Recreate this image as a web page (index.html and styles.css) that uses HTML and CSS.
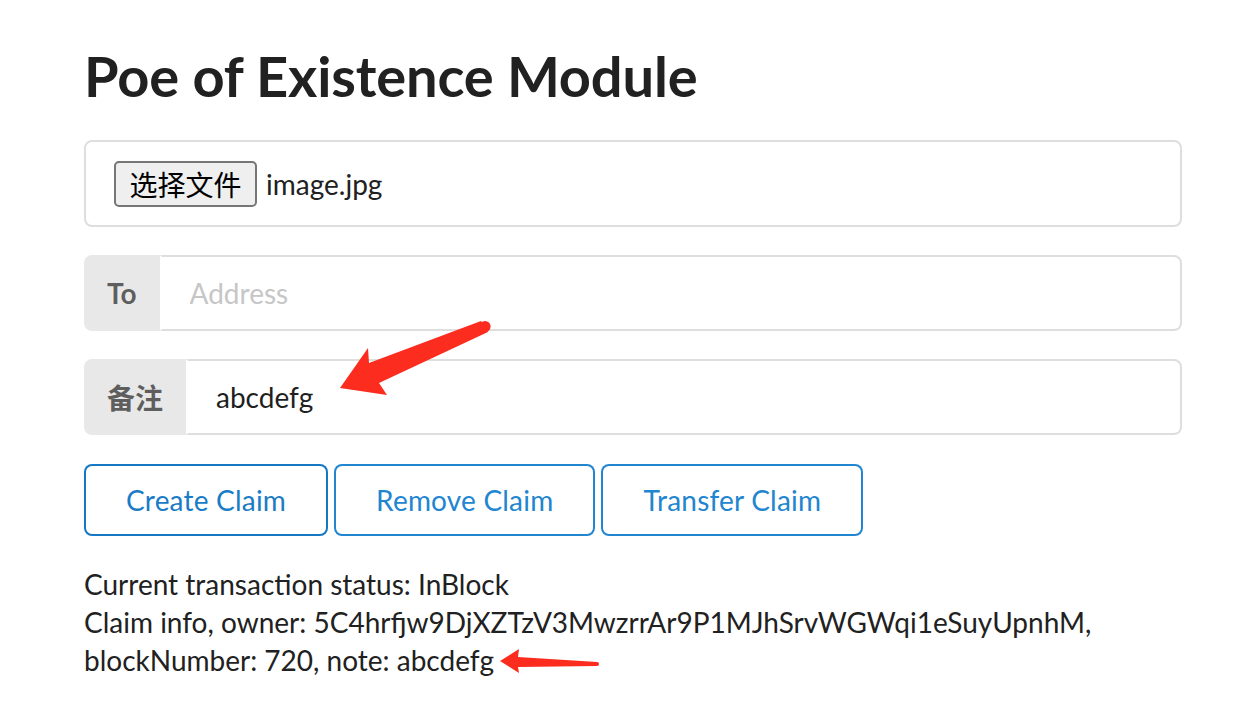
FILE: index.html
```html
<!DOCTYPE html>
<html lang="zh">
<head>
<meta charset="utf-8">
<title>Poe of Existence Module</title>
<link rel="stylesheet" href="styles.css">
</head>
<body>
<div class="page">
  <h1 class="title">Poe of Existence Module</h1>
  <form class="form">
    <div class="field">
      <div class="file-input">
        <span class="file-btn">选择文件</span>
        <span class="file-name">image.jpg</span>
      </div>
    </div>
    <div class="field">
      <div class="labeled">
        <div class="label">To</div>
        <input class="text" type="text" placeholder="Address">
      </div>
    </div>
    <div class="field">
      <div class="labeled">
        <div class="label cjk">备注</div>
        <input class="text" type="text" value="abcdefg">
      </div>
    </div>
    <div class="buttons">
      <button type="button" class="btn btn-active">Create Claim</button>
      <button type="button" class="btn">Remove Claim</button>
      <button type="button" class="btn">Transfer Claim</button>
    </div>
  </form>
  <div class="status">
    <div>Current transaction status: InBlock</div>
    <div>Claim info, owner: 5C4hrfjw9DjXZTzV3MwzrrAr9P1MJhSrvWGWqi1eSuyUpnhM, blockNumber: 720, note: abcdefg</div>
  </div>
</div>
<svg class="annotations" width="1254" height="704" viewBox="0 0 1254 704">
  <g class="arrow">
    <polygon points="481,321 369,363 368,348 340,388 387,395 379,383 488,332"/>
    <circle cx="485" cy="326.5" r="5.6"/>
    <polygon points="500,661 519,649 518,657 597,662 597,666 518,667 519,673"/>
    <circle cx="597" cy="664" r="2"/>
  </g>
</svg>
</body>
</html>
```

FILE: styles.css
```css
html, body {
  margin: 0;
  padding: 0;
  background: #ffffff;
}

body {
  font-family: Lato, "Noto Sans CJK SC", sans-serif;
  color: rgba(0, 0, 0, 0.87);
  font-size: 28px;
  position: relative;
  width: 1254px;
  height: 704px;
  overflow: hidden;
}

.page {
  padding: 40px 0 0 84px;
  width: 1098px;
}

.title {
  font-family: Lato, sans-serif;
  font-weight: 700;
  font-size: 56px;
  line-height: 72px;
  letter-spacing: -0.15px;
  margin: 0 0 28px 0;
  color: #212121;
}

.form {
  margin: 0;
}

.field {
  margin-bottom: 28px;
}

.file-input {
  box-sizing: border-box;
  height: 87px;
  border: 2px solid #dedede;
  border-radius: 8px;
  padding: 0 28px;
  display: flex;
  align-items: center;
}

.file-btn {
  font-family: "Noto Sans CJK SC", sans-serif;
  font-size: 28px;
  line-height: 36px;
  padding: 3px 13.5px;
  background: #efefef;
  border: 2px solid #767676;
  border-radius: 5px;
  color: #000;
  margin-right: 9px;
}

.file-name {
  font-family: Lato, sans-serif;
  font-size: 28px;
  color: #212121;
}

.labeled {
  display: flex;
  height: 76px;
}

.label {
  display: flex;
  align-items: center;
  padding: 0 23px;
  background: #e8e8e8;
  color: rgba(0, 0, 0, 0.6);
  font-weight: 700;
  font-size: 28px;
  border-radius: 8px 0 0 8px;
}

.label.cjk {
  font-family: "Noto Sans CJK SC", sans-serif;
  font-size: 28px;
}

.text {
  flex: 1;
  min-width: 0;
  box-sizing: border-box;
  height: 76px;
  margin: 0;
  padding: 0 28px;
  font-family: Lato, sans-serif;
  font-size: 28px;
  color: #1f1f1f;
  border: 2px solid #dedede;
  border-left-color: transparent;
  border-radius: 0 8px 8px 0;
  outline: none;
  background: #fff;
}

.text::placeholder {
  color: #c6c6c6;
}

.buttons {
  display: flex;
  gap: 6px;
  margin-bottom: 29px;
  padding-top: 1px;
}

.btn {
  font-family: Lato, sans-serif;
  font-size: 28px;
  font-weight: 400;
  line-height: 28px;
  letter-spacing: 0.2px;
  height: 72px;
  padding: 0 42px;
  background: #fff;
  color: #2185d0;
  border: none;
  box-shadow: inset 0 0 0 2px #2185d0;
  border-radius: 8px;
  cursor: pointer;
}

.btn-active {
  color: #1a7bc6;
  box-shadow: inset 0 0 0 2px #1678c2;
}

.status {
  font-size: 28px;
  line-height: 38px;
  color: #212121;
}

.annotations {
  position: absolute;
  top: 0;
  left: 0;
  pointer-events: none;
}

.arrow {
  fill: #fc2c1f;
}
```
